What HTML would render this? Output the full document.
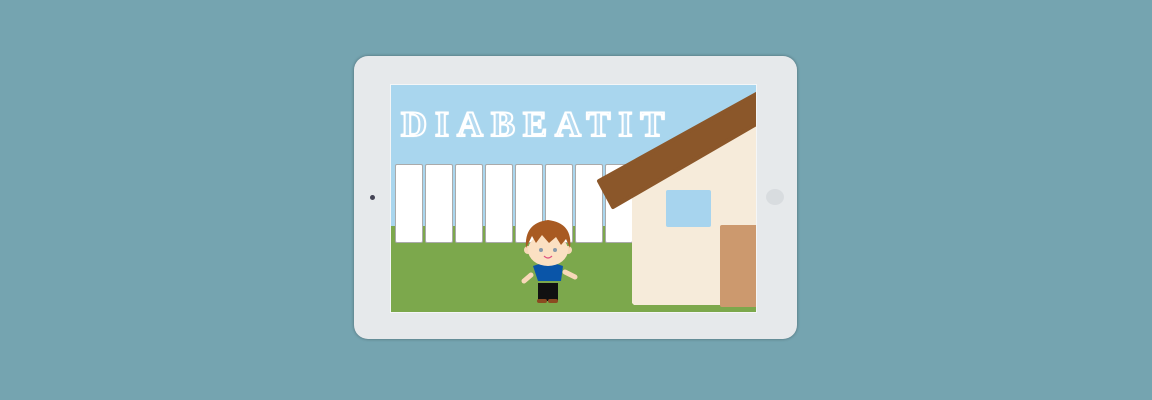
<!DOCTYPE html>
<html><head><style>
body{margin:0;width:1152px;height:400px;background:#75a4b0;overflow:hidden;position:relative}
.tab{position:absolute;left:354px;top:56px;width:443px;height:283px;background:#e6e9eb;border-radius:14px;box-shadow:0 0 3px rgba(0,0,0,.35)}
.scr{position:absolute;left:390px;top:84px;width:367px;height:229px;background:#a9d6ee;overflow:hidden;border:1px solid #f4f6f7;box-sizing:border-box}
.abs{position:absolute}
.plank{position:absolute;top:79px;width:28px;height:79px;background:#fff;border:1px solid #aaa;border-radius:2px;box-sizing:border-box}
.title{position:absolute;left:10px;top:18px;font:bold 36px "Liberation Serif",serif;letter-spacing:8px;color:#b5daf0;-webkit-text-stroke:2px #fff;text-shadow:0 0 2px #fff}
</style></head><body>
<div class="tab">
 <div class="abs" style="left:16px;top:139px;width:5px;height:5px;border-radius:50%;background:#445"></div>
 <div class="abs" style="left:412px;top:133px;width:18px;height:16px;border-radius:50%;background:#d8dcdf"></div>
</div>
<div class="scr">
 <div class="abs" style="left:0;top:141px;width:367px;height:90px;background:#7ca84c"></div>
 <div class="title">DIABEATIT</div>
 <div class="plank" style="left:4px"></div><div class="plank" style="left:34px"></div><div class="plank" style="left:64px"></div><div class="plank" style="left:94px"></div><div class="plank" style="left:124px"></div><div class="plank" style="left:154px"></div><div class="plank" style="left:184px"></div><div class="plank" style="left:214px"></div>
 <svg class="abs" style="left:0;top:0" width="367" height="229">
 <polygon points="241,108 367,38 367,220 243,220 241,218" fill="#f6ebda"/>
 <rect x="275" y="105" width="45" height="37" fill="#a7d4ee" rx="2"/>
 <rect x="329" y="140" width="40" height="82" fill="#cc996e" rx="2"/>
 <polygon points="208,96 367,8 367,38 222,122" fill="#8b572a" stroke="#8b572a" stroke-width="4" stroke-linejoin="round"/>
 <g>
  <path d="M140,190 L133,196" stroke="#f8d8b8" stroke-width="5" stroke-linecap="round"/>
  <path d="M174,187 L184,192" stroke="#f8d8b8" stroke-width="5" stroke-linecap="round"/>
  <rect x="147" y="198" width="20" height="18" fill="#111"/>
  <rect x="146" y="214" width="10" height="4" fill="#8b4a20" rx="2"/><rect x="157" y="214" width="10" height="4" fill="#8b4a20" rx="2"/>
  <path d="M142,181 Q157,175 172,181 L170,196 L147,196 Z" fill="#0a55a8"/>
  <circle cx="137" cy="165" r="4" fill="#f8d8b8"/><circle cx="177" cy="165" r="4" fill="#f8d8b8"/>
  <ellipse cx="157" cy="165" rx="20" ry="16" fill="#fbe0c2"/>
  <path d="M135,163 Q133,138 157,135 Q182,138 179,163 L175,154 L170,160 L165,152 L158,158 L151,150 L145,158 L141,151 Z" fill="#a85a22"/>
  <circle cx="150" cy="165" r="2" fill="#8899aa"/><circle cx="164" cy="165" r="2" fill="#8899aa"/>
  <path d="M153,171 Q157,175 161,171" stroke="#e05080" stroke-width="1.2" fill="none"/>
 </g></svg>
</div>
</body></html>
